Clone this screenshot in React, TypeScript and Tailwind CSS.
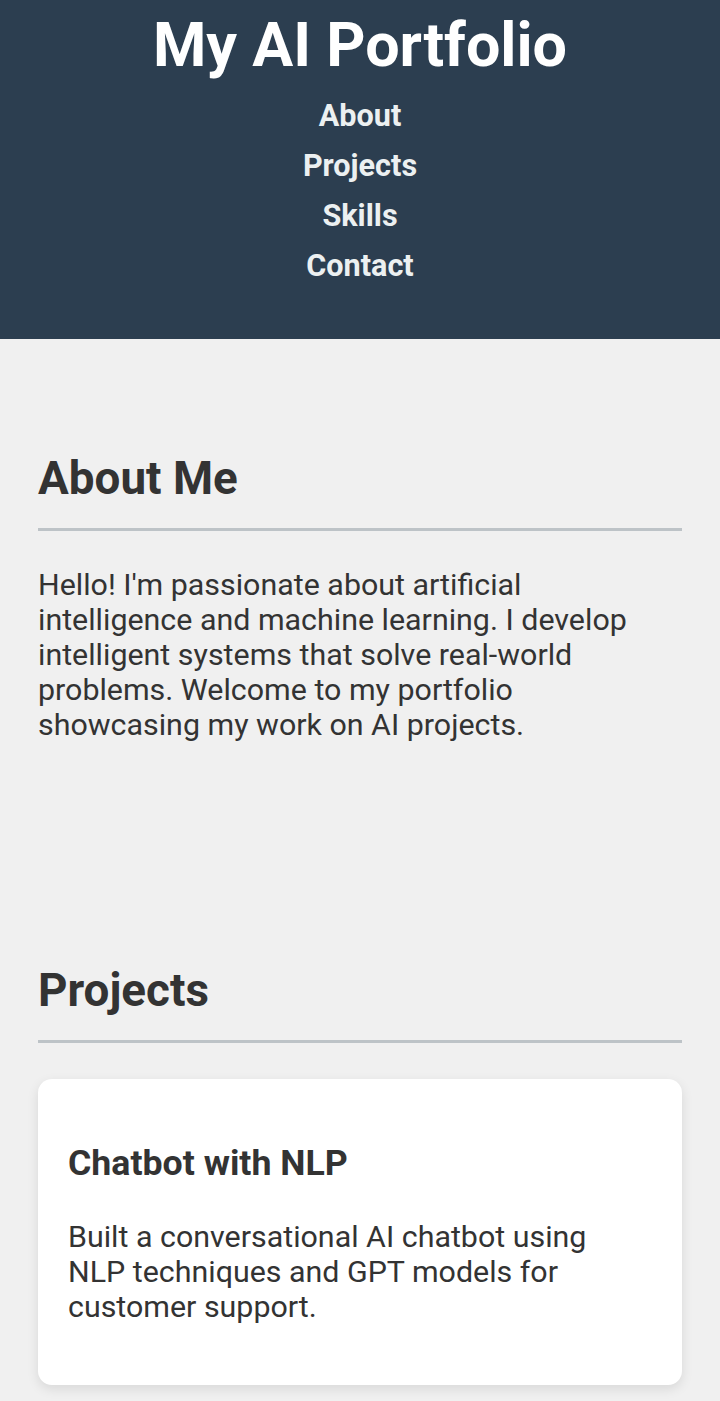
import React from 'react';

const navLinks = ['About', 'Projects', 'Skills', 'Contact'];

const projects = [
  {
    title: 'Chatbot with NLP',
    description:
      'Built a conversational AI chatbot using NLP techniques and GPT models for customer support.',
  },
];

function SectionTitle({ children }: { children: React.ReactNode }) {
  return (
    <h2 className="text-[45.8px] font-bold leading-[54px] pb-[22px] border-b-[3px] border-[#bdc3c7]">
      {children}
    </h2>
  );
}

export default function App() {
  return (
    <div className="min-h-[1401px] bg-[#f0f0f0] text-[#333333] font-['Roboto',sans-serif]">
      {/* Header */}
      <header className="bg-[#2c3e50] text-center pt-[10px] pb-[48px]">
        <h1 className="text-white text-[61px] font-bold leading-[70px]">My AI Portfolio</h1>
        <nav className="mt-[11px] flex flex-col items-center">
          {navLinks.map((link) => (
            <a
              key={link}
              href={`#${link.toLowerCase()}`}
              className="text-[#ecf0f1] text-[30.6px] font-bold leading-[50px]"
            >
              {link}
            </a>
          ))}
        </nav>
      </header>

      <main className="px-[38px]">
        {/* About */}
        <section id="about" className="pt-[113px]">
          <SectionTitle>About Me</SectionTitle>
          <p className="mt-[36px] text-[30.4px] leading-[35px]">
            Hello! I'm passionate about artificial intelligence and machine learning. I develop
            intelligent systems that solve real-world problems. Welcome to my portfolio showcasing
            my work on AI projects.
          </p>
        </section>

        {/* Projects */}
        <section id="projects" className="pt-[222px]">
          <SectionTitle>Projects</SectionTitle>
          <div className="mt-[36px] flex flex-col gap-6">
            {projects.map((p) => (
              <div
                key={p.title}
                className="bg-white rounded-[14px] shadow-[0_4px_12px_rgba(0,0,0,0.1)] pl-[30px] pr-[44px] pt-[64px] pb-[61px]"
              >
                <h3 className="text-[35.7px] font-bold leading-[40px]">{p.title}</h3>
                <p className="mt-[36px] text-[30.4px] leading-[35px]">{p.description}</p>
              </div>
            ))}
          </div>
        </section>
      </main>
    </div>
  );
}
